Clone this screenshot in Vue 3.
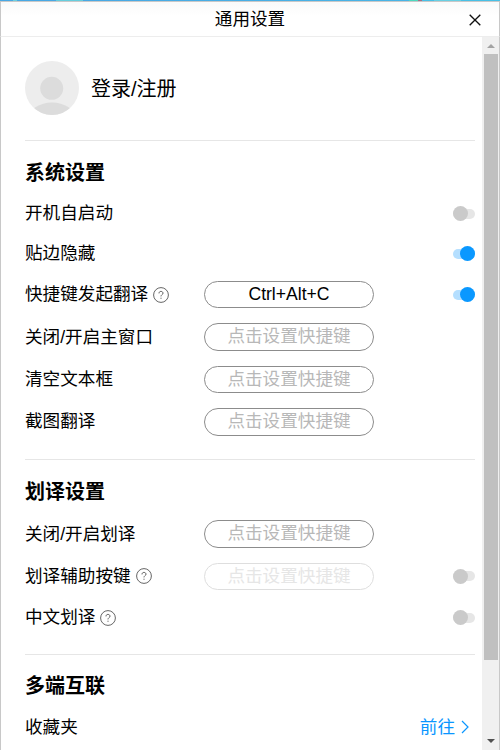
<script setup>
const hint = '点击设置快捷键'
const sections = [
  {
    title: '系统设置',
    rows: [
      { label: '开机自启动', toggle: 'off' },
      { label: '贴边隐藏', toggle: 'on' },
      { label: '快捷键发起翻译', help: true, key: 'Ctrl+Alt+C', toggle: 'on' },
      { label: '关闭/开启主窗口', key: '' },
      { label: '清空文本框', key: '' },
      { label: '截图翻译', key: '' },
    ],
  },
  {
    title: '划译设置',
    rows: [
      { label: '关闭/开启划译', key: '' },
      { label: '划译辅助按键', help: true, key: '', disabled: true, toggle: 'off' },
      { label: '中文划译', help: true, toggle: 'off' },
    ],
  },
  { title: '多端互联', rows: [{ label: '收藏夹', link: '前往' }] },
]
</script>

<template>
  <div class="window">
    <div class="backdrop"></div>
    <header class="titlebar">
      <h1>通用设置</h1>
      <svg class="close" width="12" height="12" viewBox="0 0 12 12">
        <path d="M.7.7 11.3 11.3M11.3.7.7 11.3" fill="none" stroke="#111" stroke-width="1.35" />
      </svg>
    </header>
    <div class="body">
      <main class="content">
        <div class="account">
          <svg width="54" height="54" viewBox="0 0 54 54">
            <defs><clipPath id="disc"><circle cx="27" cy="27" r="27" /></clipPath></defs>
            <circle cx="27" cy="27" r="27" fill="#ededed" />
            <g fill="#dcdcdc" clip-path="url(#disc)">
              <circle cx="26.7" cy="27.3" r="11.5" />
              <ellipse cx="27" cy="57" rx="23" ry="15.5" />
            </g>
          </svg>
          <span>登录/注册</span>
        </div>
        <section v-for="s in sections" :key="s.title">
          <h2>{{ s.title }}</h2>
          <div v-for="r in s.rows" :key="r.label" class="row" :class="{ tall: r.key !== undefined }">
            <div class="label">
              <span>{{ r.label }}</span>
              <svg v-if="r.help" class="help" width="16" height="16" viewBox="0 0 16 16" fill="none" stroke="#555">
                <circle cx="8" cy="8" r="7.4" stroke-width=".9" />
                <path d="M6 6.4C6 5.1 6.8 4.4 8 4.4S10 5.2 10 6.2C10 7.5 8 7.7 8 9.4M8 10.7V11.8" stroke-width=".95" />
              </svg>
            </div>
            <div v-if="r.key !== undefined" class="key" :class="{ empty: !r.key, disabled: r.disabled }">{{ r.key || hint }}</div>
            <div v-if="r.toggle" class="toggle" :class="r.toggle"><i></i></div>
            <a v-if="r.link" class="link">
              {{ r.link }}
              <svg width="8" height="14" viewBox="0 0 8 14"><path d="M1 1 7 7 1 13" fill="none" stroke="#0a96ff" stroke-width="1.2" /></svg>
            </a>
          </div>
        </section>
      </main>
      <div class="scrollbar">
        <svg class="arrow" width="8" height="4" viewBox="0 0 8 4"><path d="M0 4 4 0 8 4Z" fill="#a3a3a3" /></svg>
        <div class="thumb"></div>
        <svg class="arrow down" width="8" height="4" viewBox="0 0 8 4"><path d="M0 0H8L4 4Z" fill="#505050" /></svg>
      </div>
    </div>
  </div>
</template>

<style>
body {
  margin: 0;
  overflow: hidden;
}
</style>

<style scoped>
.window {
  box-sizing: border-box;
  width: 500px;
  height: 750px;
  display: flex;
  flex-direction: column;
  overflow: hidden;
  background: #fff;
  color: #000;
  font: 17.6px/24px "Liberation Sans", "Noto Sans CJK SC", sans-serif;
}
.backdrop {
  height: 1px;
  flex: none;
  background: linear-gradient(90deg, #48a8e4 0 13px, #6cd0dc 13px 17px, #48a8e4 17px 56px, #66cddd 56px 83px, #48a8e4 83px, #48b4e6 409px, #4cd8be 409px 418px, #a46c86 418px 422px, #48c0e6 422px 434px, #68cfe3 434px 461px, #48c0e6 461px);
}
.titlebar {
  box-sizing: border-box;
  height: 36px;
  flex: none;
  display: grid;
  grid-template-columns: 1fr auto 1fr;
  align-items: center;
  border: 1px solid #c8c8c8;
  border-bottom-color: #ededed;
  background: linear-gradient(#fafafa, #fff 14px);
}
h1 {
  grid-column: 2;
  margin: 0;
  padding-bottom: 1px;
  font-size: 17.6px;
  font-weight: 400;
}
.close {
  justify-self: end;
  margin: 2px 18px 0 0;
}
.body {
  flex: 1;
  min-height: 0;
  display: flex;
  border: solid #c8c8c8;
  border-width: 0 1px;
}
.content {
  flex: 1;
  padding: 0 7px 0 24px;
  overflow: hidden;
}
.account {
  height: 103px;
  display: flex;
  align-items: center;
  gap: 12px;
  font-size: 20px;
}
.account svg {
  margin-bottom: 1px;
}
section {
  border-top: 1px solid #e6e6e6;
  padding-bottom: 16.3px;
}
h2 {
  margin: 0;
  padding: 11.5px 0 0;
  font-size: 20px;
  line-height: 41px;
  font-weight: 700;
}
.row {
  height: 40px;
  display: flex;
  align-items: center;
}
.row.tall {
  height: 42.4px;
}
.label {
  width: 179px;
  display: flex;
  align-items: center;
  gap: 5px;
  white-space: nowrap;
}
.label span {
  padding-bottom: 1px;
}
.key {
  box-sizing: border-box;
  width: 170px;
  height: 27.5px;
  border: 1px solid #8c8c8c;
  border-radius: 14px;
  line-height: 25px;
  text-align: center;
}
.key.empty {
  color: #b8b8b8;
}
.key.disabled {
  border-color: #dedede;
  color: #e6e6e6;
}
.toggle {
  width: 22px;
  height: 10px;
  margin-left: auto;
  border-radius: 5px;
  display: flex;
  align-items: center;
  background: #e6e6e6;
}
.toggle i {
  width: 15px;
  height: 15px;
  flex: none;
  border-radius: 50%;
  background: #cacaca;
}
.toggle.on {
  justify-content: flex-end;
  background: #b5dfff;
}
.toggle.on i {
  background: #0a98ff;
}
.link {
  margin-left: auto;
  padding-right: 6px;
  display: flex;
  align-items: center;
  gap: 6px;
  color: #0a96ff;
}
.scrollbar {
  width: 17px;
  flex: none;
  display: flex;
  flex-direction: column;
  align-items: center;
  background: #f0f0f0;
}
.arrow {
  flex: none;
  margin: 7px 0 6px 1px;
}
.thumb {
  width: 14px;
  height: 606px;
  margin-left: 1px;
  background: #c0c0c0;
}
.arrow.down {
  margin: auto 0 7px 1px;
}
</style>
